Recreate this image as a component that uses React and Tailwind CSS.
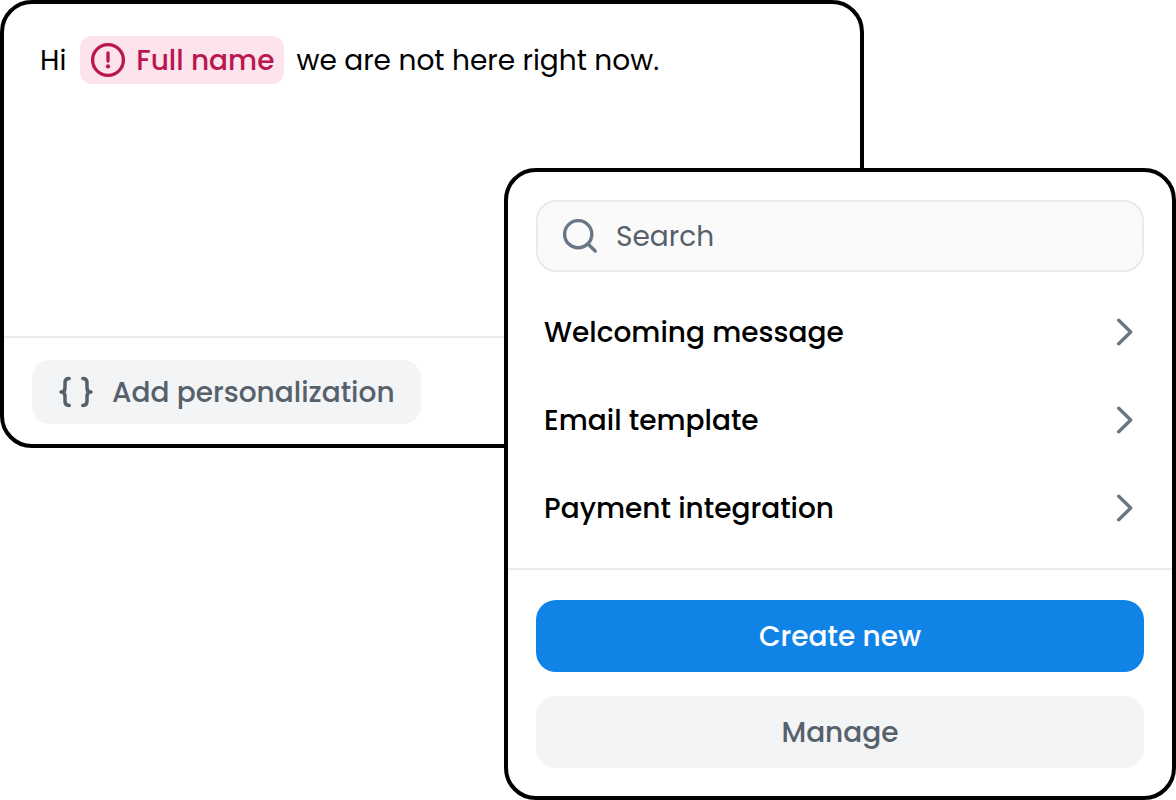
import React from 'react';

const templates = ['Welcoming message', 'Email template', 'Payment integration'];

function AlertIcon() {
  return (
    <svg className="size-9 shrink-0" viewBox="0 0 36 36" fill="none" stroke="currentColor" strokeWidth="3.3" strokeLinecap="round" aria-hidden="true">
      <circle cx="18" cy="18" r="15.4" />
      <path d="M18 11v8" />
      <circle cx="18" cy="24.4" r="2.1" fill="currentColor" stroke="none" />
    </svg>
  );
}

function BracesIcon() {
  return (
    <svg className="size-9 shrink-0" viewBox="0 0 36 36" fill="none" stroke="currentColor" strokeWidth="3.5" strokeLinecap="round" strokeLinejoin="round" aria-hidden="true">
      <path d="M11.2 4.6C8.400 4.600 7 6 7 8.800V14C7 16.600 5.500 18 3 18C5.500 18 7 19.400 7 22V27.200C7 30 8.400 31.400 11.200 31.400" />
      <path d="M24.800 4.600C27.600 4.600 29 6 29 8.800V14C29 16.600 30.500 18 33 18C30.500 18 29 19.400 29 22V27.200C29 30 27.600 31.400 24.800 31.400" />
    </svg>
  );
}

function SearchIcon() {
  return (
    <svg className="size-9 shrink-0" viewBox="0 0 36 36" fill="none" stroke="currentColor" strokeWidth="3.4" strokeLinecap="round" aria-hidden="true">
      <circle cx="16.200" cy="16.200" r="13.600" />
      <path d="M26 26l7.200 7" />
    </svg>
  );
}

function ChevronIcon() {
  return (
    <svg className="h-7 w-5 shrink-0 text-[#697685]" viewBox="0 0 20 28" fill="none" stroke="currentColor" strokeWidth="3.4" strokeLinecap="round" strokeLinejoin="round" aria-hidden="true">
      <path d="M2.700 2.200L14.700 14L2.700 25.800" />
    </svg>
  );
}

function Editor() {
  return (
    <section className="col-span-2 col-start-1 row-span-2 row-start-1 flex flex-col rounded-4xl border-4 border-black bg-white">
      <div className="grow px-9 pt-8">
        <p className="flex items-center">
          <span>Hi</span>
          <span className="mr-3 ml-3.5 flex h-12 items-center gap-2.5 rounded-xl bg-[#fce3ec] px-2.5 font-medium text-[#ba1650]">
            <AlertIcon />
            Full name
          </span>
          <span>we are not here right now.</span>
        </p>
      </div>
      <div className="border-t-2 border-[#ebebeb] px-7 pt-[22px] pb-5">
        <button type="button" className="flex h-16 items-center gap-[18px] rounded-[18px] bg-[#f3f4f6] px-[26px] font-medium text-[#56616b]">
          <BracesIcon />
          Add personalization
        </button>
      </div>
    </section>
  );
}

function TemplatePicker() {
  return (
    <section className="col-span-2 col-start-2 row-span-2 row-start-2 rounded-4xl border-4 border-black bg-white">
      <div className="px-7 pt-7">
        <label className="flex h-18 items-center gap-[18px] rounded-[20px] border-2 border-[#ebebeb] bg-[#fafafa] px-6 text-[#697685]">
          <SearchIcon />
          <input type="search" aria-label="Search" placeholder="Search" className="w-full min-w-0 bg-transparent text-[#56616b] outline-none placeholder:text-[#56616b]" />
        </label>
      </div>
      <ul className="px-9 pt-4 pb-4">
        {templates.map((name) => (
          <li key={name}>
            <button type="button" className="flex h-22 w-full items-center justify-between text-left font-medium">
              {name}
              <ChevronIcon />
            </button>
          </li>
        ))}
      </ul>
      <div className="flex flex-col gap-6 border-t-2 border-[#ebebeb] px-7 pt-[30px] pb-7">
        <button type="button" className="h-18 rounded-[20px] bg-[#1083e7] font-medium text-white">Create new</button>
        <button type="button" className="h-18 rounded-[20px] bg-[#f3f4f6] font-medium text-[#56616b]">Manage</button>
      </div>
    </section>
  );
}

export default function App() {
  return (
    <main className="grid min-h-screen grid-cols-[21fr_15fr_13fr] grid-rows-[168px_280px_auto] bg-white font-[Poppins,Inter,sans-serif] text-[28px] leading-[41px] text-black">
      <Editor />
      <TemplatePicker />
    </main>
  );
}
